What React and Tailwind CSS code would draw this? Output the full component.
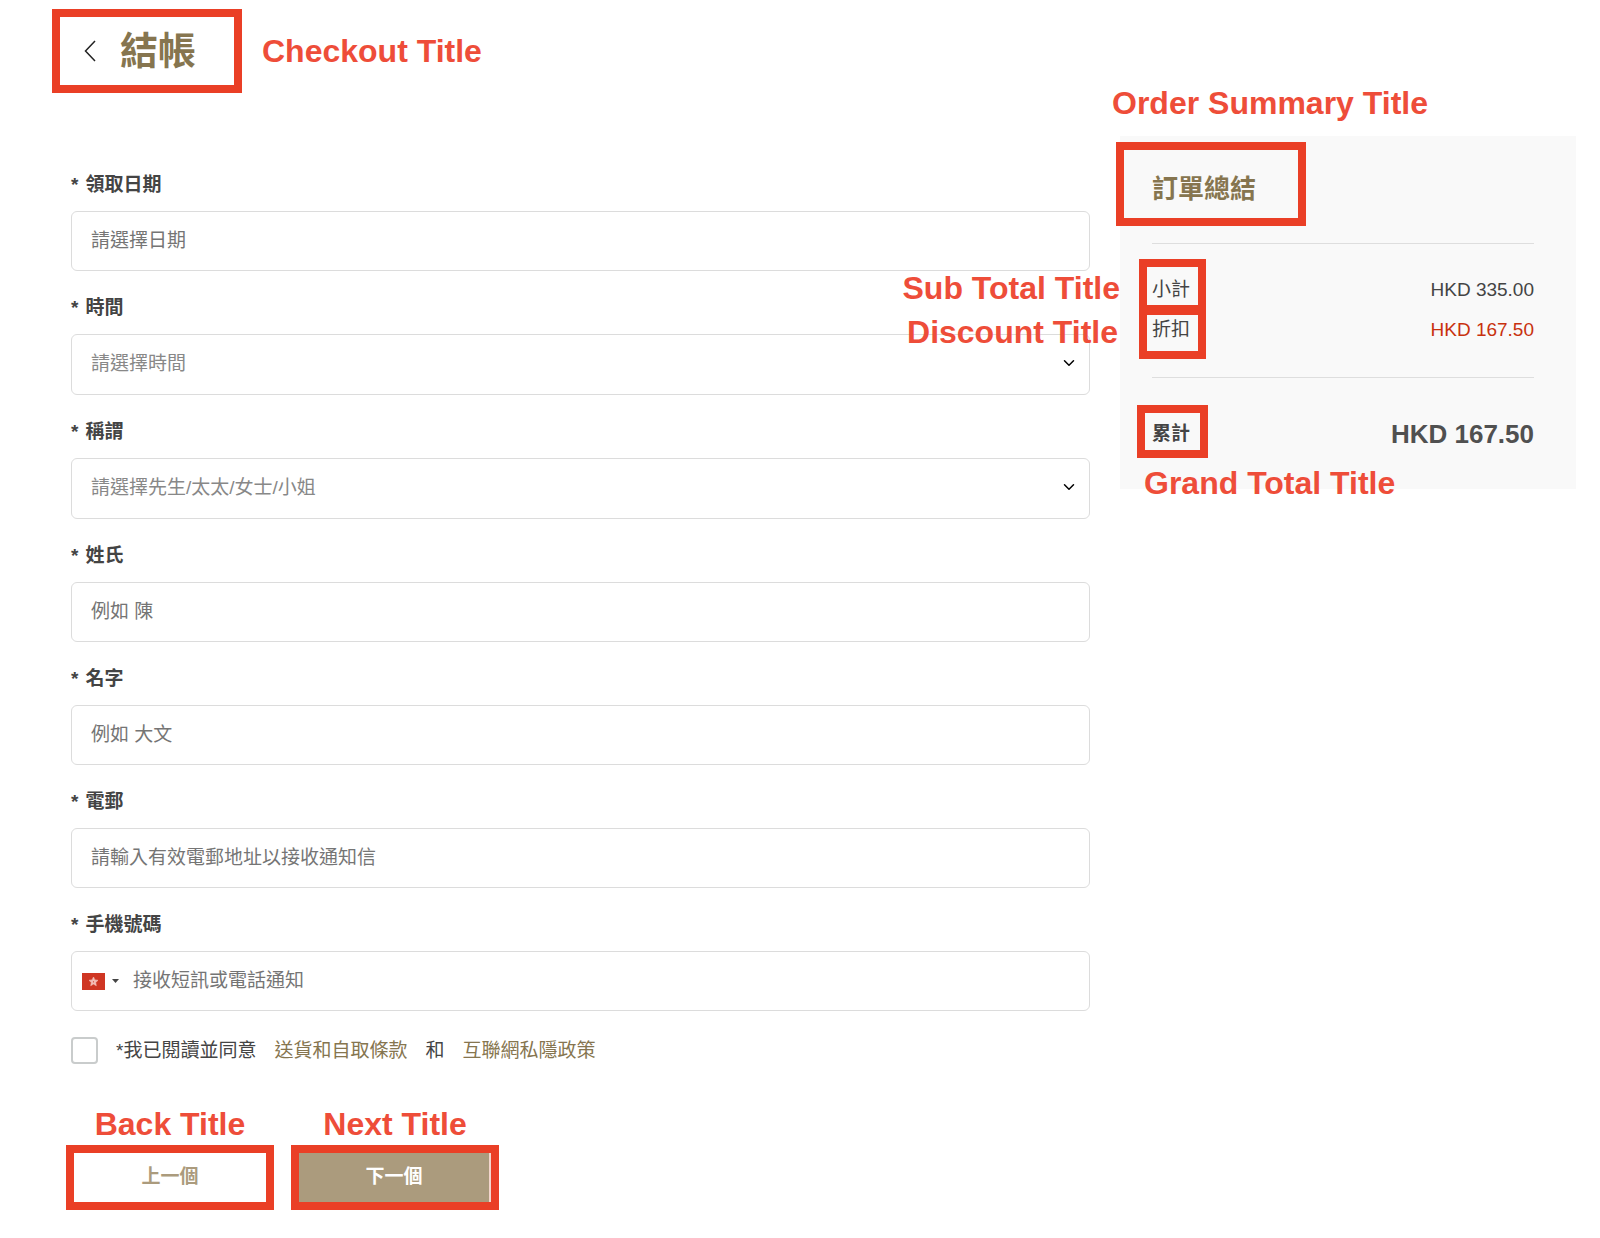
import React from 'react';
import { ChevronDown } from 'lucide-react';

const fields = [
  { id: 'date', label: '領取日期', type: 'text', placeholder: '請選擇日期' },
  { id: 'time', label: '時間', type: 'select', placeholder: '請選擇時間' },
  { id: 'title', label: '稱謂', type: 'select', placeholder: '請選擇先生/太太/女士/小姐' },
  { id: 'surname', label: '姓氏', type: 'text', placeholder: '例如 陳' },
  { id: 'name', label: '名字', type: 'text', placeholder: '例如 大文' },
  { id: 'email', label: '電郵', type: 'email', placeholder: '請輸入有效電郵地址以接收通知信' },
  { id: 'phone', label: '手機號碼', type: 'tel', placeholder: '接收短訊或電話通知' },
];

const Note = ({ className = '', children }) => (
  <p className={`text-[32px] leading-8 font-bold whitespace-nowrap text-[#ee4d39] ${className}`}>{children}</p>
);

// red marker drawn over the text it belongs to
const Marker = ({ className }) => (
  <span aria-hidden="true" className={`pointer-events-none absolute border-8 border-[#ea3f26] ${className}`} />
);

const HongKongFlag = () => (
  <svg width="23" height="17" viewBox="0 0 23 17" aria-hidden="true">
    <rect width="23" height="17" fill="#cf3623" />
    <path
      d="M11.5 4l1.4 2.9 3.1.4-2.3 2.2.6 3.2-2.8-1.6-2.8 1.6.6-3.2L7 7.300l3.100-.4z"
      fill="#f3bdb6"
      stroke="#f3bdb6"
      strokeWidth="0.6"
      strokeLinejoin="round"
    />
    <circle cx="11.5" cy="8.8" r="0.6" fill="#cf3623" />
  </svg>
);

const Field = ({ field }) => {
  const box = 'w-full rounded-md border border-[#dcdcdc] bg-white text-[19px] text-[#444]';

  return (
    <div className="flex flex-col gap-[14px]">
      <label htmlFor={field.id} className="flex gap-[7px] text-[19px] leading-6 font-bold text-[#444]">
        <span>*</span>
        {field.label}
      </label>

      {field.type === 'select' && (
        <div className="relative">
          <select
            id={field.id}
            defaultValue=""
            className={`${box} block h-[61px] appearance-none pl-[19px] text-[#888]`}
          >
            <option value="">{field.placeholder}</option>
          </select>
          <ChevronDown className="pointer-events-none absolute top-5 right-3 size-[18px] text-black" />
        </div>
      )}

      {field.type === 'tel' && (
        <div className={`${box} flex h-[60px] items-center pl-[10px]`}>
          <button type="button" aria-label="Hong Kong" className="flex items-center gap-[7px]">
            <HongKongFlag />
            <svg width="7" height="4" viewBox="0 0 7 4" aria-hidden="true">
              <path d="M0 0h7L3.5 4z" fill="#444" />
            </svg>
          </button>
          <input
            id={field.id}
            type="tel"
            placeholder={field.placeholder}
            className="h-full flex-1 pl-[14px] outline-none placeholder:text-[#757575]"
          />
        </div>
      )}

      {field.type !== 'select' && field.type !== 'tel' && (
        <input
          id={field.id}
          type={field.type}
          placeholder={field.placeholder}
          className={`${box} h-[60px] px-[19px] placeholder:text-[#757575]`}
        />
      )}
    </div>
  );
};

const OrderSummary = () => (
  <aside className="relative mt-[43px] w-[456px] shrink-0 self-start bg-[#f9f9f9] pt-[37px] pr-[42px] pb-[39px] pl-8 text-[19px] text-[#444]">
    <h2 className="relative text-[26px] leading-8 font-bold text-[#86754f]">
      訂單總結
      <Marker className="-top-[31px] -left-9 h-[84px] w-[190px]" />
    </h2>

    <dl>
      <div className="mt-[38px] flex flex-col gap-4 border-t border-[#dedede] pt-[34px] leading-6">
        <div className="flex justify-between">
          <dt className="relative">
            小計
            <Marker className="-top-[19px] -left-[13px] h-[54px] w-[67px]" />
          </dt>
          <dd>HKD 335.00</dd>
        </div>
        <div className="flex justify-between">
          <dt className="relative">
            折扣
            <Marker className="-top-[11px] -left-[13px] h-[52px] w-[67px]" />
          </dt>
          <dd className="text-[#c8310e]">HKD 167.50</dd>
        </div>
      </div>
      <div className="mt-[35px] flex justify-between border-t border-[#dedede] pt-10 leading-8 font-bold">
        <dt className="relative">
          累計
          <Marker className="-top-[13px] -left-[15px] h-[53px] w-[71px]" />
        </dt>
        <dd className="text-[26px] text-[#505050]">HKD 167.50</dd>
      </div>
    </dl>

    <Note className="absolute -top-[49px] -left-2">Order Summary Title</Note>
    <Note className="absolute top-[136px] -right-px right-full">Sub Total Title</Note>
    <Note className="absolute top-[180px] right-full mr-[2px]">Discount Title</Note>
    <Note className="absolute top-[331px] left-6">Grand Total Title</Note>
  </aside>
);

const App = () => {
  return (
    <div className="min-h-screen bg-white pb-7 font-['Liberation_Sans','Noto_Sans_CJK_TC',sans-serif]" lang="zh-HK">
      <header className="flex items-center gap-5 pt-[9px] pl-[52px]">
        <div className="flex h-[84px] w-[190px] items-center border-8 border-[#ea3f26] pl-6">
          <button type="button" aria-label="返回">
            <svg width="12" height="22" viewBox="0 0 12 22" fill="none" stroke="#222" strokeWidth="1.5" aria-hidden="true">
              <path d="M11 1L1.5 11 11 21" />
            </svg>
          </button>
          <h1 className="pl-6 text-[38px] leading-10 font-bold text-[#86754f]">結帳</h1>
        </div>
        <Note>Checkout Title</Note>
      </header>

      <main className="flex gap-[30px] pr-6 pl-[71px]">
        <form className="min-w-0 flex-1 pt-20" onSubmit={(e) => e.preventDefault()}>
          <div className="flex flex-col gap-[25px]">
            {fields.map((field) => (
              <Field key={field.id} field={field} />
            ))}
          </div>

          <div className="mt-[26px] flex items-center gap-[18px] text-[19px] leading-6 text-[#444]">
            <input
              id="agree"
              type="checkbox"
              className="size-[27px] shrink-0 appearance-none rounded-sm border-2 border-[#c9cccc] bg-white"
            />
            <p className="flex gap-[18px]">
              <label htmlFor="agree">*我已閱讀並同意</label>
              <a href="#terms" className="text-[#86754f]">送貨和自取條款</a>
              <span>和</span>
              <a href="#privacy" className="text-[#86754f]">互聯網私隱政策</a>
            </p>
          </div>

          <div className="mt-11 -ml-[5px] flex gap-[17px]">
            <div className="flex flex-col items-center gap-[5px]">
              <Note>Back Title</Note>
              <div className="flex h-[65px] w-[208px] border-8 border-[#ea3f26]">
                <button type="button" className="flex-1 bg-white text-[19px] font-bold text-[#ab9b7d]">
                  上一個
                </button>
              </div>
            </div>
            <div className="flex flex-col items-center gap-[5px]">
              <Note>Next Title</Note>
              <div className="flex h-[65px] w-[208px] border-8 border-[#ea3f26]">
                <button type="submit" className="flex-1 border-r-2 border-[#f3d5cc] bg-[#ab9b7d] text-[19px] font-bold text-white">
                  下一個
                </button>
              </div>
            </div>
          </div>
        </form>

        <OrderSummary />
      </main>
    </div>
  );
};

export default App;
